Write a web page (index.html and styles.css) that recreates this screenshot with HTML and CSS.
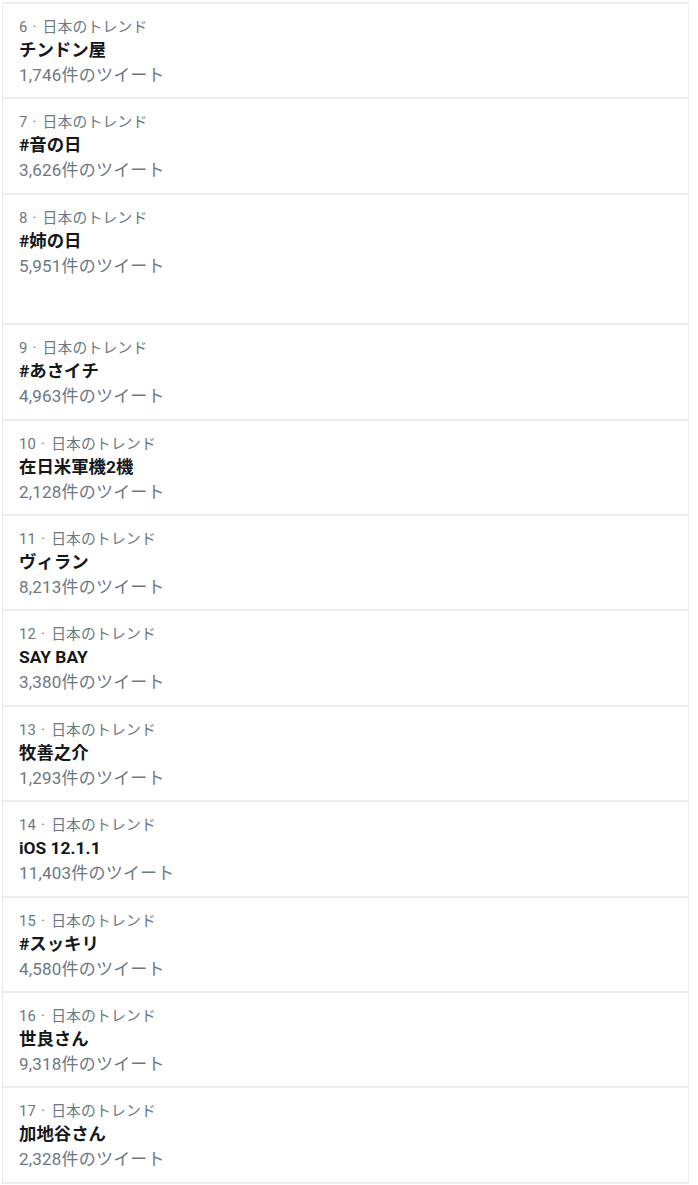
FILE: index.html
```html
<!DOCTYPE html>
<html lang="ja">
<head>
<meta charset="utf-8">
<link rel="stylesheet" href="styles.css">
</head>
<body>
<div class="list">
  <div class="trend"><div class="meta">6<span class="dot">·</span>日本のトレンド</div><div class="title">チンドン屋</div><div class="count">1,746件のツイート</div></div>
  <div class="trend"><div class="meta">7<span class="dot">·</span>日本のトレンド</div><div class="title">#音の日</div><div class="count">3,626件のツイート</div></div>
  <div class="trend tall"><div class="meta">8<span class="dot">·</span>日本のトレンド</div><div class="title">#姉の日</div><div class="count">5,951件のツイート</div></div>
  <div class="trend"><div class="meta">9<span class="dot">·</span>日本のトレンド</div><div class="title">#あさイチ</div><div class="count">4,963件のツイート</div></div>
  <div class="trend"><div class="meta">10<span class="dot">·</span>日本のトレンド</div><div class="title">在日米軍機2機</div><div class="count">2,128件のツイート</div></div>
  <div class="trend"><div class="meta">11<span class="dot">·</span>日本のトレンド</div><div class="title">ヴィラン</div><div class="count">8,213件のツイート</div></div>
  <div class="trend"><div class="meta">12<span class="dot">·</span>日本のトレンド</div><div class="title">SAY BAY</div><div class="count">3,380件のツイート</div></div>
  <div class="trend"><div class="meta">13<span class="dot">·</span>日本のトレンド</div><div class="title">牧善之介</div><div class="count">1,293件のツイート</div></div>
  <div class="trend"><div class="meta">14<span class="dot">·</span>日本のトレンド</div><div class="title">iOS 12.1.1</div><div class="count">11,403件のツイート</div></div>
  <div class="trend"><div class="meta">15<span class="dot">·</span>日本のトレンド</div><div class="title">#スッキリ</div><div class="count">4,580件のツイート</div></div>
  <div class="trend"><div class="meta">16<span class="dot">·</span>日本のトレンド</div><div class="title">世良さん</div><div class="count">9,318件のツイート</div></div>
  <div class="trend"><div class="meta">17<span class="dot">·</span>日本のトレンド</div><div class="title">加地谷さん</div><div class="count">2,328件のツイート</div></div>
</div>
</body>
</html>
```

FILE: styles.css
```css
html, body {
  margin: 0;
  padding: 0;
  background: #ffffff;
}
body {
  font-family: Roboto, "Noto Sans CJK JP", sans-serif;
}
.list {
  margin: 2px 9px 0 2px;
  border-left: 1px solid #eaefec;
  border-right: 1px solid #eef2f0;
  border-top: 2px solid #e9eeeb;
}
.trend {
  box-sizing: border-box;
  height: 95.4px;
  padding: 13px 0 0 16px;
  border-bottom: 2px solid #e9eeeb;
}
.trend.tall {
  height: 130.5px;
}
.meta {
  font-size: 14.8px;
  line-height: 20px;
  color: #6b7884;
  letter-spacing: 0.2px;
}
.dot {
  margin: 0 6px 0 5px;
}
.title {
  font-size: 17.4px;
  font-weight: 700;
  line-height: 25px;
  color: #15181b;
  margin-top: 1px;
}
.count {
  font-size: 17px;
  line-height: 25px;
  color: #6b7884;
  letter-spacing: 0.2px;
}
```
